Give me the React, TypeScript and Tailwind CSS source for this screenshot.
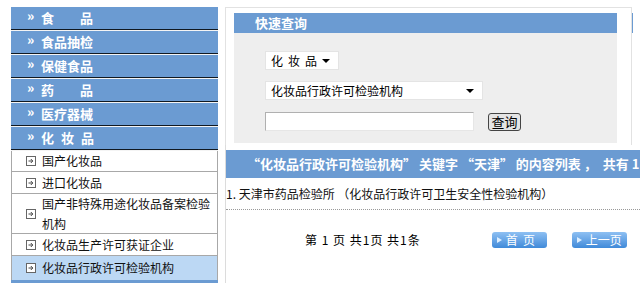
const font = { fontFamily: '"Noto Sans CJK SC", "Liberation Sans", sans-serif' };

const categories = [
  { label: "食　　品", cls: "" },
  { label: "食品抽检", cls: "" },
  { label: "保健食品", cls: "" },
  { label: "药　　品", cls: "" },
  { label: "医疗器械", cls: "" },
  { label: "化妆品", cls: "tracking-[7px]" },
];

const subItems = [
  { label: "国产化妆品", h: "h-[21px]" },
  { label: "进口化妆品", h: "h-[22px]" },
  { label: "国产非特殊用途化妆品备案检验机构", h: "h-[40px]" },
  { label: "化妆品生产许可获证企业", h: "h-[22px]" },
];

const BoxArrow = () => (
  <svg width="10" height="10" viewBox="0 0 10 10" className="shrink-0">
    <rect x="0.5" y="0.5" width="9" height="9" fill="#fff" stroke="#666" />
    <path d="M2.5 5h4M4.8 3l2 2-2 2" fill="none" stroke="#444" strokeWidth="1" />
  </svg>
);

const Sidebar = () => (
  <div className="w-[207px] shrink-0 flex flex-col">
    {categories.map((c) => (
      <div key={c.label} className="h-[24px] flex flex-col">
        <div className="h-[22px] bg-[#6b9bd2] flex items-center pl-[16px] text-white font-bold text-[13px]">
          <span className="text-[13px] font-black leading-none -mt-[5px] w-[14px]">»</span>
          <span className={c.cls}>{c.label}</span>
        </div>
        <div className="h-[1px] bg-[#101820]" />
        <div className="h-[1px] bg-[#f4f4f4]" />
      </div>
    ))}
    <div className="border-l border-r border-[#a8a8a8] text-[12px] text-[#111]">
      {subItems.map((s) => (
        <div
          key={s.label}
          className={`${s.h} flex items-center border-b border-[#a8a8a8] pl-[14px] pr-1 gap-[6px] leading-[20px]`}
        >
          <BoxArrow />
          <span>{s.label}</span>
        </div>
      ))}
      <div className="h-[24px] flex items-center bg-[#bcd8f4] pl-[14px] gap-[6px]">
        <BoxArrow />
        <span>化妆品行政许可检验机构</span>
      </div>
    </div>
    <div className="h-[3px] bg-[#6b9bd2]" />
  </div>
);

const SelectBox = ({ label, w, cls }: { label: string; w: string; cls?: string }) => (
  <div className={`${w} h-[19px] bg-white border border-[#e4e4e4] flex items-center justify-between pl-[5px] pr-[8px] text-[12px] text-black`}>
    <span className={cls}>{label}</span>
    <span className="w-0 h-0 border-l-[4px] border-r-[4px] border-t-[4px] border-l-transparent border-r-transparent border-t-black" />
  </div>
);

const PagerButton = ({ label }: { label: string }) => (
  <div className="w-[55px] h-[16px] rounded-[3px] bg-gradient-to-b from-[#8ec0f2] to-[#3f8ad9] flex items-center pl-[5px] gap-[4px] text-white text-[12px]">
    <span className="w-0 h-0 border-t-[3px] border-b-[3px] border-l-[5px] border-t-transparent border-b-transparent border-l-[#dceeff]" />
    <span className="whitespace-pre">{label}</span>
  </div>
);

export default function App() {
  return (
    <div className="w-[640px] h-[294px] overflow-hidden bg-white relative" style={font}>
      <div className="flex pt-[7px] pl-[11px]">
        <Sidebar />
        <div className="ml-[7px] flex-1 min-w-0 flex flex-col">
          <div className="w-[407px] border-t border-l border-r border-[#e2e2e2] pl-[8px] pr-[14px] pt-[5px] pb-[2px] relative">
            <div className="h-[20px] bg-[#6b9bd2] text-white font-bold text-[13px] flex items-center pl-[21px]">
              快速查询
            </div>
            <div className="h-[110px] bg-[#eeeeee] pl-[31px] pt-[18px] flex flex-col">
              <SelectBox label="化妆品" w="w-[74px]" cls="tracking-[5px]" />
              <div className="h-[11px]" />
              <SelectBox label="化妆品行政许可检验机构" w="w-[218px]" />
              <div className="h-[12px]" />
              <div className="flex items-center gap-[14px]">
                <div className="w-[209px] h-[19px] bg-white border border-[#b0b0b0] border-b-[#e6e6e6] border-r-[#e6e6e6]" />
                <div className="w-[33px] h-[18px] rounded-[3px] border border-[#444] bg-[#e4e4e4] text-[13px] leading-none flex items-center justify-center text-black">
                  查询
                </div>
              </div>
            </div>
            <div className="absolute right-[-2px] top-[5px] w-[1px] h-[20px] bg-[#6b9bd2]" />
          </div>
          <div className="border-l border-[#dcdcdc] h-[138px] pt-[5px] flex flex-col">
            <div className="h-[28px] w-[430px] bg-[#6b9bd2] text-white font-bold text-[13px] flex items-center pl-[21px] whitespace-pre">
              “化妆品行政许可检验机构” 关键字 “天津” 的内容列表 ，  共有 1
            </div>
            <div className="h-[31px] flex items-center text-[12px] text-[#111] whitespace-nowrap">
              1. 天津市药品检验所 （化妆品行政许可卫生安全性检验机构）
            </div>
            <div className="border-t border-dotted border-[#999] w-[430px]" />
            <div className="flex items-center h-[40px] mt-[10px] text-[12px] text-black whitespace-pre">
              <span className="ml-[79px] tracking-[1px]">第 1 页 共1页 共1条</span>
              <div className="ml-[71px]">
                <PagerButton label="首  页" />
              </div>
              <div className="ml-[25px]">
                <PagerButton label="上一页" />
              </div>
            </div>
          </div>
        </div>
      </div>
    </div>
  );
}
